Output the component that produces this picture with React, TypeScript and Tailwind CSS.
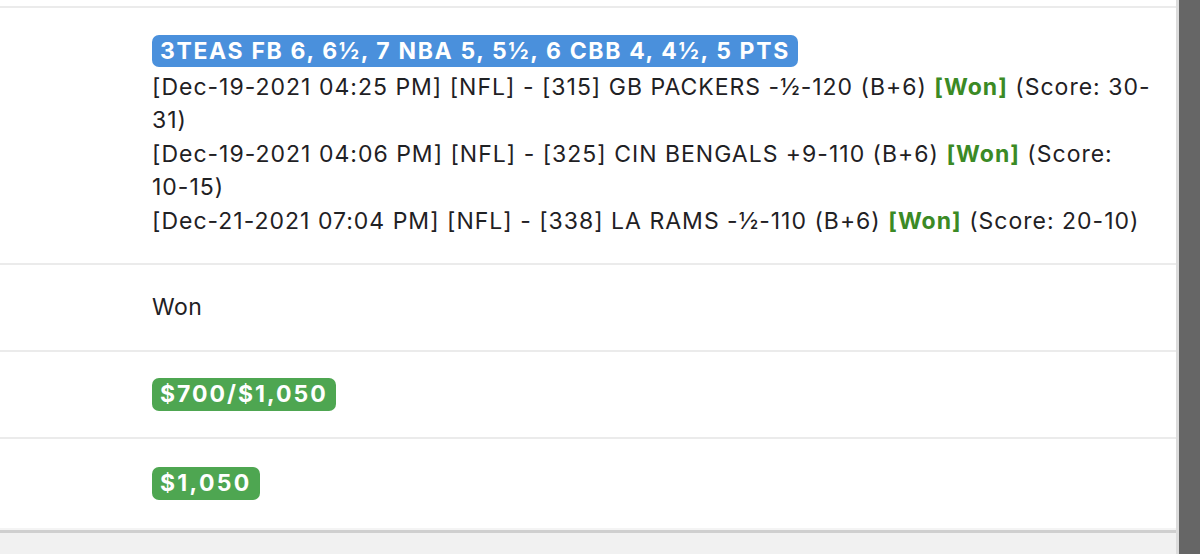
import React from 'react';

const font = { fontFamily: 'Inter, "Noto Sans", sans-serif' };

const WonTag = () => <span className="font-bold text-[#3b8a25]">[Won]</span>;

const App = () => {
  return (
    <div className="flex h-[554px] w-[1200px] overflow-hidden bg-white text-[#1f2124]" style={font}>
      <div className="flex flex-1 flex-col border-r-[3px] border-[#dcdcdc]">
        <div className="h-[8px] border-b-2 border-[#ebebeb]" />
        <div className="whitespace-nowrap border-b-2 border-[#ebebeb] pb-[25px] pl-[152px] pt-[27px] text-[23px] leading-[33.5px] tracking-[1px]">
          <span className="inline-block rounded-[7px] bg-[#4a90dc] px-[8px] text-[23px] font-bold leading-[32px] tracking-[1.65px] text-white">
            3TEAS FB 6, 6½, 7 NBA 5, 5½, 6 CBB 4, 4½, 5 PTS
          </span>
          <div className="mt-[2px]">
            <div>
              [Dec-19-2021 04:25 PM] [NFL] - [315] GB PACKERS -½-120 (B+6) <WonTag /> (Score: 30-
              <br />
              31)
            </div>
            <div>
              [Dec-19-2021 04:06 PM] [NFL] - [325] CIN BENGALS +9-110 (B+6) <WonTag /> (Score:
              <br />
              10-15)
            </div>
            <div>
              [Dec-21-2021 07:04 PM] [NFL] - [338] LA RAMS -½-110 (B+6) <WonTag /> (Score: 20-10)
            </div>
          </div>
        </div>
        <div className="flex h-[87px] items-center border-b-2 border-[#ebebeb] pl-[152px] text-[23px] tracking-[0.5px]">
          Won
        </div>
        <div className="flex h-[87px] items-center border-b-2 border-[#ebebeb] pl-[152px]">
          <span className="rounded-[7px] bg-[#4ea651] px-[8px] text-[23px] font-bold leading-[33px] tracking-[2px] text-white">
            $700/$1,050
          </span>
        </div>
        <div className="flex h-[89px] items-center pl-[152px]">
          <span className="rounded-[7px] bg-[#4ea651] px-[8px] text-[23px] font-bold leading-[33px] tracking-[2.3px] text-white">
            $1,050
          </span>
        </div>
        <div className="h-[2px] bg-[#f4f4f4]" />
        <div className="h-[3px] bg-[#cfcfcf]" />
        <div className="flex-1 bg-[#f1f1f1]" />
      </div>
      <div className="w-[21px] bg-[#666666]" />
    </div>
  );
};

export default App;
